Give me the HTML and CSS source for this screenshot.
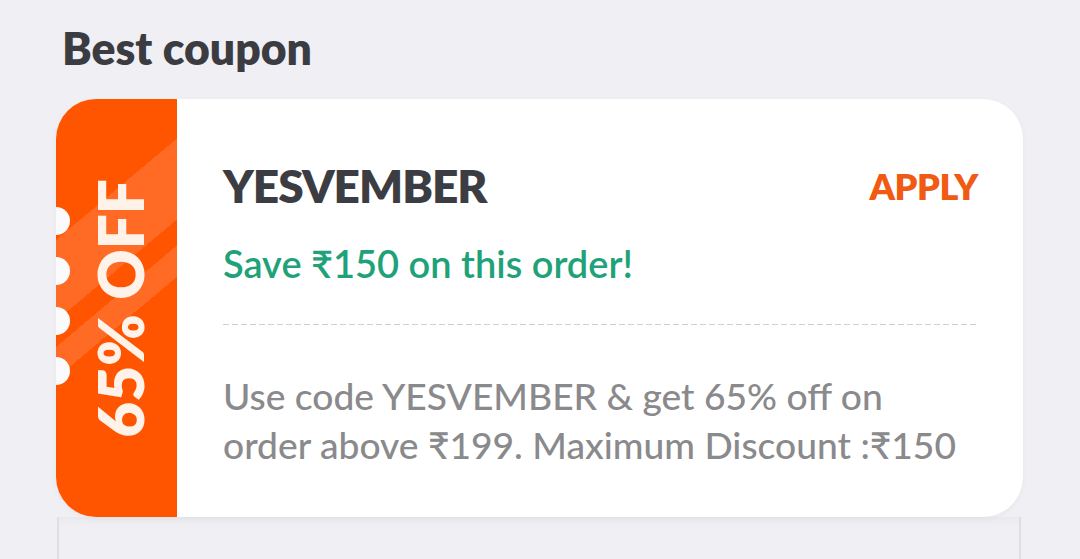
FILE: index.html
```html
<!DOCTYPE html>
<html lang="en">
<head>
<meta charset="utf-8">
<title>Best coupon</title>
<link rel="stylesheet" href="styles.css">
</head>
<body>
<div class="page">
  <h2 class="title">Best coupon</h2>
  <div class="coupon">
    <div class="strip">
      <div class="notches">
        <span class="notch"></span>
        <span class="notch"></span>
        <span class="notch"></span>
        <span class="notch"></span>
      </div>
      <span class="off">65% OFF</span>
    </div>
    <div class="body">
      <div class="row">
        <span class="code">YESVEMBER</span>
        <span class="apply">APPLY</span>
      </div>
      <div class="save">Save ₹150 on this order!</div>
      <div class="dash"></div>
      <p class="desc">Use code YESVEMBER &amp; get 65% off on<br>order above ₹199. Maximum Discount :₹150</p>
    </div>
  </div>
  <div class="next"></div>
</div>
</body>
</html>
```
FILE: styles.css
```css
html, body {
  margin: 0;
  background: #efeff4;
}
body {
  font-family: Lato, "Noto Sans", "DejaVu Sans", sans-serif;
  overflow: hidden;
}
.page {
  padding: 26px 57px 0 56px;
}
.title {
  margin: 0 0 28.5px 6px;
  font-size: 44.5px;
  line-height: 1;
  font-weight: 800;
  color: #3b3c42;
}
.coupon {
  display: flex;
  height: 418px;
  background: #fff;
  border-radius: 40px;
  overflow: hidden;
  box-shadow: 0 2px 6px rgba(0, 0, 0, 0.04);
  position: relative;
  z-index: 1;
}
.strip {
  flex: none;
  width: 121px;
  position: relative;
  display: flex;
  align-items: center;
  justify-content: center;
  background: linear-gradient(140deg,
    #ff5500 0 108px,
    #ff6b24 108px 170px,
    #ff5500 170px 190px,
    #ff6b24 190px 214px,
    #ff5500 214px);
}
.notches {
  position: absolute;
  left: -14px;
  top: 108px;
  display: flex;
  flex-direction: column;
  gap: 22px;
}
.notch {
  width: 28px;
  height: 28px;
  border-radius: 50%;
  background: #fbfbfd;
}
.off {
  writing-mode: vertical-rl;
  transform: rotate(180deg);
  font-size: 62px;
  font-weight: 800;
  line-height: 1;
  color: #fff2e8;
  margin-left: 6px;
  margin-top: 0;
}
.body {
  flex: 1;
  padding: 64px 45px 0 46px;
}
.row {
  display: flex;
  justify-content: space-between;
  align-items: center;
}
.code {
  font-size: 46px;
  letter-spacing: -1px;
  line-height: 1;
  font-weight: 800;
  color: #3c3d43;
}
.apply {
  font-size: 36px;
  letter-spacing: -0.5px;
  line-height: 1;
  font-weight: 800;
  color: #f05a12;
}
.save {
  margin-top: 35px;
  font-size: 38px;
  line-height: 1;
  font-weight: 600;
  color: #1fa27a;
}
.dash {
  margin-top: 42px;
  height: 1px;
  background: repeating-linear-gradient(90deg, #d0d0d0 0 6px, transparent 6px 9px);
}
.desc {
  margin: 46px 0 0;
  font-size: 37.2px;
  line-height: 49px;
  font-weight: 500;
  color: #8a8a8c;
}
.next {
  height: 60px;
  margin: 0 2px 0 1px;
  border-left: 2px solid #dedee3;
  border-right: 2px solid #dedee3;
  background: linear-gradient(#e9e9ee, #f0f0f4 10px);
}
```
